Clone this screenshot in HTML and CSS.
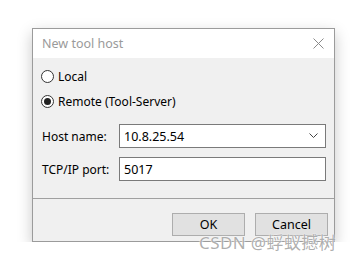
FILE: index.html
```html
<!DOCTYPE html>
<html lang="en">

<head>
    <meta charset="UTF-8">
    <title>New tool host</title>
    <link rel="stylesheet" href="styles.css">
</head>

<body>
    <div class="dialog">
        <!-- Title Bar -->
        <div class="titlebar">
            <span class="title">New tool host</span>
            <svg class="close-icon" width="11" height="11" viewBox="0 0 11 11">
                <path d="M0.5 0.5 L10.5 10.5 M10.5 0.5 L0.5 10.5" stroke="#8a8a8a" stroke-width="1" fill="none"/>
            </svg>
        </div>

        <!-- Content -->
        <div class="content">
            <label class="radio-row">
                <span class="radio"></span>
                <span>Local</span>
            </label>
            <label class="radio-row">
                <span class="radio checked"></span>
                <span>Remote (Tool-Server)</span>
            </label>

            <div class="form-row host-row">
                <span class="form-label">Host name:</span>
                <div class="field combo">
                    <span>10.8.25.54</span>
                    <svg width="9" height="6" viewBox="0 0 9 6">
                        <path d="M0.5 0.5 L4.5 4.5 L8.5 0.5" stroke="#444" stroke-width="1" fill="none"/>
                    </svg>
                </div>
            </div>
            <div class="form-row">
                <span class="form-label">TCP/IP port:</span>
                <div class="field">
                    <span>5017</span>
                </div>
            </div>
        </div>

        <!-- Buttons -->
        <div class="footer">
            <button class="btn">OK</button>
            <button class="btn">Cancel</button>
        </div>
    </div>

    <div class="watermark">CSDN @蜉蚁撼树</div>
</body>

</html>
```

FILE: styles.css
```css
/* General Styling */
body {
    font-family: 'Noto Sans', 'Open Sans', sans-serif;
    background-color: #ffffff;
    color: #000;
    margin: 0;
    padding: 0;
    font-size: 12px;
}

.dialog {
    width: 301px;
    margin: 28px 0 0 32px;
    border: 1px solid #9b9b9b;
    background-color: #f0f0f0;
    box-shadow: 0 5px 14px rgba(0, 0, 0, 0.22);
}

/* Title Bar */
.titlebar {
    height: 29px;
    background-color: #fff;
    display: flex;
    justify-content: space-between;
    align-items: center;
    padding: 0 10px 0 9px;
}

.title {
    color: #9a9a9a;
    font-size: 12.5px;
}

/* Content */
.content {
    height: 141px;
    box-sizing: border-box;
    padding: 6px 8px 0 8px;
    border-bottom: 1px solid #a0a0a0;
}

.radio-row {
    height: 24px;
    display: flex;
    align-items: center;
    gap: 4px;
    margin-bottom: 1px;
}

.radio {
    width: 11px;
    height: 11px;
    border: 1px solid #333;
    border-radius: 50%;
    background-color: #fff;
    display: flex;
    justify-content: center;
    align-items: center;
}

.radio.checked::after {
    content: "";
    width: 7px;
    height: 7px;
    border-radius: 50%;
    background-color: #222;
}

.form-row {
    display: flex;
    align-items: center;
    margin-top: 9px;
}

.host-row {
    margin-top: 11px;
}

.form-label {
    width: 78px;
    padding-left: 1px;
    box-sizing: border-box;
}

.field {
    width: 207px;
    height: 24px;
    box-sizing: border-box;
    border: 1px solid #7a7a7a;
    background-color: #fff;
    display: flex;
    align-items: center;
    justify-content: space-between;
    padding: 0 7px 0 4px;
    font-size: 12.5px;
}

/* Footer */
.footer {
    height: 42px;
    box-sizing: border-box;
    padding: 14px 6px 0 0;
    display: flex;
    justify-content: flex-end;
    align-items: flex-start;
    gap: 10px;
}

.btn {
    width: 73px;
    height: 23px;
    background-color: #e1e1e1;
    border: 1px solid #adadad;
    font-family: inherit;
    font-size: 12.5px;
    color: #000;
    padding: 0;
}

/* Watermark */
.watermark {
    position: absolute;
    left: 199px;
    top: 229px;
    font-family: 'Noto Sans', 'Noto Sans CJK SC', sans-serif;
    font-size: 17px;
    color: rgba(120, 120, 120, 0.6);
    text-shadow: 0 0 2px #fff, 0 0 1px #fff;
    letter-spacing: 0.4px;
}
```
